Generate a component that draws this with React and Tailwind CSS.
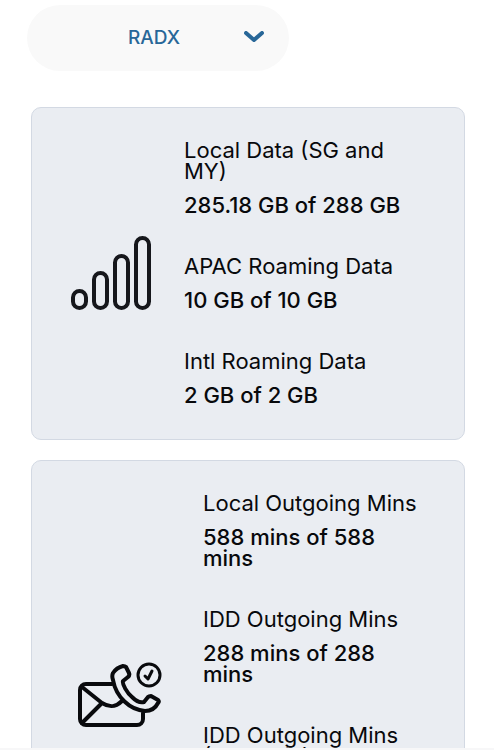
function SignalIcon() {
  return (
    <svg viewBox="0 0 82 76" className="h-[76px] w-[82px]" fill="none" stroke="#16171c" strokeWidth="4" aria-hidden="true">
      <rect x="3" y="56" width="13" height="17" rx="6.500" />
      <rect x="24" y="38" width="13" height="35" rx="6.500" />
      <rect x="45" y="21" width="13" height="52" rx="6.500" />
      <rect x="66" y="3" width="13" height="70" rx="6.500" />
    </svg>
  );
}

function CallMessageIcon() {
  return (
    <svg viewBox="0 0 84 66" className="h-[66px] w-[84px]" fill="none" stroke="#090a0d" strokeWidth="4" strokeLinecap="round" strokeLinejoin="round" aria-hidden="true">
      <path d="M34 22H8a6 6 0 0 0-6 6v29a6 6 0 0 0 6 6h51a6 6 0 0 0 6-6v-6" />
      <path d="M4 25l20 16c8 5 14 4 20-2M24 41L4 61" />
      <path d="M35 11c2-3 6-6 10-7 1 0 2 0 3 1l3 6c1 2 0 3-1 4l-5 4c-1 3 4 12 9 16 4 4 9 6 12 5l4-5c1-1 2-1 3-1l7 4c1 1 1 2 0 3-3 6-7 8-13 8-15-1-29-14-32-31-1-3-1-5 0-7Z" />
      <circle cx="71" cy="13" r="11" strokeWidth="3" />
      <path d="M67 14l3 3 4-8" strokeWidth="3" />
    </svg>
  );
}

function Allowance({ label, value }) {
  return (
    <div className="flex flex-col gap-[13px]">
      <dt>{label}</dt>
      <dd className="font-medium">{value}</dd>
    </div>
  );
}

function AllowanceCard({ icon, items, iconArea }) {
  return (
    <section className="flex items-center rounded-[10px] border border-[#d3d9e3] bg-[#eaedf2] pt-8 pr-10 pb-[33px]">
      <div className={`flex shrink-0 ${iconArea}`}>{icon}</div>
      <dl className="flex min-w-0 flex-1 flex-col gap-10 text-[22px] leading-[21px] text-[#08090c]">
        {items.map((item) => (
          <Allowance key={item.label} {...item} />
        ))}
      </dl>
    </section>
  );
}

const dataItems = [
  { label: "Local Data (SG and MY)", value: "285.18 GB of 288 GB" },
  { label: "APAC Roaming Data", value: "10 GB of 10 GB" },
  { label: "Intl Roaming Data", value: "2 GB of 2 GB" },
];

const minuteItems = [
  { label: "Local Outgoing Mins", value: "588 mins of 588 mins" },
  { label: "IDD Outgoing Mins", value: "288 mins of 288 mins" },
  { label: "IDD Outgoing Mins (Malaysia)", value: "88 mins" },
  { label: "SMS", value: "88 of 88" },
];

export default function App() {
  return (
    <main className="h-screen overflow-hidden border-b-2 border-[#f7f7f8] bg-white pt-[5px] pr-[29px] pl-[31px] font-['Inter',sans-serif]">
      <div className="relative -ml-1 h-[66px] w-[262px]">
        <select aria-label="Plan" className="h-full w-full appearance-none rounded-full bg-[#f9f9f9] pr-2 text-center text-[19px] font-medium text-[#286798]">
          <option>RADX</option>
        </select>
        <svg viewBox="0 0 20 12" className="pointer-events-none absolute top-[26px] right-[25px] h-3 w-5" fill="none" stroke="#286798" strokeWidth="4" strokeLinecap="round" strokeLinejoin="round" aria-hidden="true">
          <path d="M2 2l8 7 8-7" />
        </svg>
      </div>
      <div className="mt-9 flex flex-col gap-5">
        <AllowanceCard icon={<SignalIcon />} items={dataItems} iconArea="w-[152px] pl-[38px]" />
        <AllowanceCard icon={<CallMessageIcon />} items={minuteItems} iconArea="w-[171px] pl-[46px]" />
      </div>
    </main>
  );
}
